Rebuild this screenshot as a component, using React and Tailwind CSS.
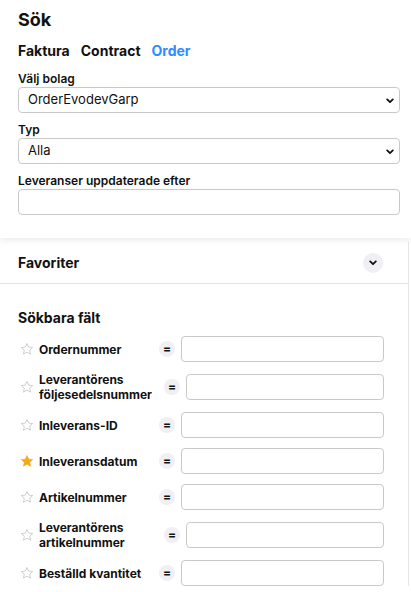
import React from "react";

function Chevron({ className = "" }) {
  return (
    <svg className={className} width="8" height="6" viewBox="0 0 8 6" fill="none">
      <path d="M1.2 1.4L4 4.2L6.8 1.4" stroke="#111" strokeWidth="1.8" strokeLinecap="round" strokeLinejoin="round" />
    </svg>
  );
}

function Star({ filled }) {
  return (
    <svg width="14" height="14" viewBox="0 0 24 24">
      <path
        d="M12 2.5l2.9 6.3 6.9.7-5.2 4.6 1.5 6.8L12 17.4l-6.1 3.5 1.5-6.8-5.2-4.6 6.9-.7z"
        fill={filled ? "#f7a614" : "none"}
        stroke={filled ? "#f7a614" : "#c4c4c4"}
        strokeWidth={filled ? "1" : "1.4"}
        strokeLinejoin="round"
      />
    </svg>
  );
}

function SelectBox({ value }) {
  return (
    <div className="relative h-[26px] rounded-[4px] border border-[#c9c9c9] bg-white flex items-center pl-[9px] text-[13px] text-[#111]">
      <span>{value}</span>
      <Chevron className="absolute right-[5px] top-[10px]" />
    </div>
  );
}

const rows = [
  { label: "Ordernummer" },
  { label: "Leverantörens följesedelsnummer" },
  { label: "Inleverans-ID" },
  { label: "Inleveransdatum", fav: true },
  { label: "Artikelnummer" },
  { label: "Leverantörens artikelnummer" },
  { label: "Beställd kvantitet" },
];

export default function App() {
  return (
    <div className="w-[411px] h-[592px] overflow-hidden bg-white text-[#111]" style={{ fontFamily: "Inter, 'Liberation Sans', sans-serif" }}>
      <div className="relative z-10 bg-white pl-[18px] pr-[11px] pt-[8px] pb-[23px] shadow-[0_3px_6px_rgba(0,0,0,0.07)]">
        <h1 className="text-[18px] font-bold leading-[24px]">Sök</h1>
        <div className="mt-[9px] flex gap-[11px] text-[14px] font-bold leading-[20px]">
          <span>Faktura</span>
          <span>Contract</span>
          <span className="text-[#2e8cff]">Order</span>
        </div>
        <div className="mt-[10px] text-[12px] font-semibold leading-[16px]">Välj bolag</div>
        <SelectBox value="OrderEvodevGarp" />
        <div className="mt-[9px] text-[12px] font-semibold leading-[16px]">Typ</div>
        <SelectBox value="Alla" />
        <div className="mt-[9px] text-[12px] font-semibold leading-[16px]">Leveranser uppdaterade efter</div>
        <div className="h-[26px] rounded-[4px] border border-[#c9c9c9] bg-white" />
      </div>
      <div className="mt-[4px] w-[409px] border-r border-[#e6e6e6] bg-white">
        <div className="h-[42px] px-[18px] flex items-center justify-between border-b border-[#e4e4e4]">
          <span className="text-[14px] font-bold">Favoriter</span>
          <div className="mr-[7px] w-[20px] h-[20px] rounded-full bg-[#efeff4] flex items-center justify-center">
            <Chevron />
          </div>
        </div>
        <div className="pl-[18px] pt-[24px] pr-[24px]">
          <div className="text-[14px] font-bold leading-[20px]">Sökbara fält</div>
          <div className="mt-[8px] flex flex-col gap-[10px]">
            {rows.map((r) => (
              <div key={r.label} className="flex items-center">
                <div className="ml-[2px] w-[14px] flex justify-center">
                  <Star filled={r.fav} />
                </div>
                <div className="ml-[5px] min-w-[108px] max-w-[113px] text-[12px] font-bold leading-[15px]">{r.label}</div>
                <div className="ml-[12px] w-[16px] h-[16px] shrink-0 rounded-full bg-[#efeff4] flex items-center justify-center text-[12px] font-bold leading-none">=</div>
                <div className="ml-[6px] flex-1 h-[26px] rounded-[4px] border border-[#c9c9c9] bg-white" />
              </div>
            ))}
          </div>
        </div>
      </div>
    </div>
  );
}
